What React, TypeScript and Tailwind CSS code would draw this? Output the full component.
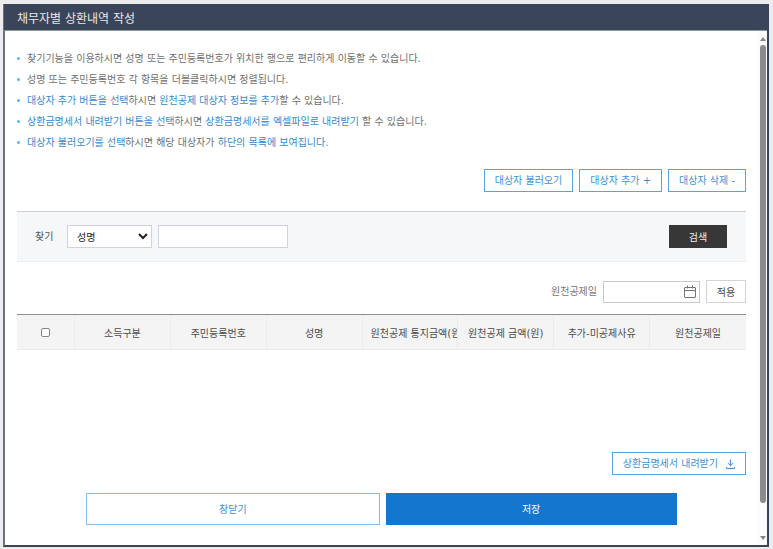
import React from "react";

const outline =
  "h-[23px] border border-[#5aa3de] bg-white px-[10px] pt-px text-[10px] leading-4 text-[#4190d3] whitespace-nowrap";

function Blue({ children }: { children: React.ReactNode }) {
  return <span className="text-[#348ad0]">{children}</span>;
}

const notes: React.ReactNode[] = [
  <>찾기기능을 이용하시면 성명 또는 주민등록번호가 위치한 행으로 편리하게 이동할 수 있습니다.</>,
  <>성명 또는 주민등록번호 각 항목을 더블클릭하시면 정렬됩니다.</>,
  <>
    <Blue>대상자 추가 버튼을 선택</Blue>하시면 <Blue>원천공제 대상자 정보를 추가</Blue>할 수 있습니다.
  </>,
  <>
    <Blue>상환금명세서 내려받기 버튼을 선택</Blue>하시면 <Blue>상환금명세서를 엑셀파일로 내려받기</Blue> 할 수 있습니다.
  </>,
  <>
    <Blue>대상자 불러오기를 선택</Blue>하시면 해당 대상자가 <Blue>하단의 목록에 보여집니다.</Blue>
  </>,
];

const columns = [
  "소득구분",
  "주민등록번호",
  "성명",
  "원천공제 통지금액(원)",
  "원천공제 금액(원)",
  "추가-미공제사유",
  "원천공제일",
];

function CalendarIcon() {
  return (
    <svg className="shrink-0" width="12" height="13" viewBox="0 0 12 13" fill="none" stroke="#73737f" aria-hidden="true">
      <rect x="0.5" y="2.5" width="11" height="10" rx="0.5" />
      <path d="M0.5 5.5h11M3.5 0.5v3M8.5 0.5v3" />
    </svg>
  );
}

function DownloadIcon() {
  return (
    <svg className="shrink-0" width="9" height="10" viewBox="0 0 9 10" fill="none" stroke="#4190d3" aria-hidden="true">
      <path d="M4.5 0.5v6.5M1.8 4l2.7 2.7 2.7-2.7M0.5 8v1.5h8V8" />
    </svg>
  );
}

function ScrollRail() {
  return (
    <div className="flex w-[10px] shrink-0 flex-col items-center bg-[#fcfcfc] pt-[6px] pb-[5px] pl-[2px]" aria-hidden="true">
      <svg width="6" height="4" viewBox="0 0 6 4" fill="#858585">
        <path d="M3 0l3 4H0z" />
      </svg>
      <div className="mt-1 w-[6px] grow-[459] rounded-full bg-[#8b8b8b]" />
      <div className="grow-[33]" />
      <svg width="6" height="4" viewBox="0 0 6 4" fill="#858585">
        <path d="M0 0h6L3 4z" />
      </svg>
    </div>
  );
}

export default function App() {
  return (
    <div className="flex min-h-screen flex-col bg-[#ececec] pt-1 pr-1 pb-[2px] pl-[3px] font-['DejaVu_Sans','Noto_Sans_CJK_KR',sans-serif] text-[10px] text-[#555]">
      <div className="flex grow flex-col border-2 border-t-0 border-[#3b4559] border-l-[#6a7180] bg-white">
        <header className="-ml-px flex h-[27px] items-center border-b border-[#8f95a1] bg-[#3b4559] pt-[3px] pl-[13px]">
          <h1 className="text-[12px] leading-4 text-[#e6e8eb]">채무자별 상환내역 작성</h1>
        </header>
        <div className="flex grow">
          <main className="min-w-0 grow pt-[17px] pr-[11px] pb-5 pl-3">
            <ul>
              {notes.map((note, i) => (
                <li key={i} className="flex items-center gap-[7px] leading-[21px] text-[#707070]">
                  <span className="size-[3px] shrink-0 rounded-full bg-[#4bbcf0]" />
                  <span>{note}</span>
                </li>
              ))}
            </ul>

            <div className="mt-4 flex justify-end gap-[6px]">
              <button type="button" className={outline}>대상자 불러오기</button>
              <button type="button" className={outline}>대상자 추가 +</button>
              <button type="button" className={outline}>대상자 삭제 -</button>
            </div>

            <form
              className="mt-[19px] flex h-[51px] items-center border-t border-b border-t-[#ccced2] border-b-[#eeeff1] bg-[#f6f7f9] pr-[19px] pl-[18px]"
              onSubmit={(e) => e.preventDefault()}
            >
              <label htmlFor="field" className="mr-3 w-5 whitespace-nowrap">찾기</label>
              <select
                id="field"
                className="h-[23px] w-[85px] border border-[#d0d2dc] bg-white pt-px pl-[5px] text-[10px] text-[#222]"
              >
                <option>성명</option>
                <option>주민등록번호</option>
              </select>
              <input
                type="text"
                aria-label="검색어"
                className="ml-[6px] h-[23px] w-[130px] border border-[#d0d2dc] bg-white px-2"
              />
              <button type="submit" className="ml-auto h-[23px] w-[58px] bg-[#373737] pt-px text-[#eee]">
                검색
              </button>
            </form>

            <div className="mt-[18px] flex items-center justify-end gap-[6px]">
              <label htmlFor="date" className="text-[#777]">원천공제일</label>
              <div className="flex h-[22px] w-[97px] items-center border border-[#c8c8cc] bg-white pr-[3px]">
                <input id="date" type="text" className="h-full min-w-0 grow px-1 outline-none" />
                <CalendarIcon />
              </div>
              <button type="button" className="h-[23px] w-10 border border-[#d4d4d4] bg-white pt-px text-[#444]">
                적용
              </button>
            </div>

            <div className="mt-[11px] h-[138px]">
              <table className="w-full table-fixed border-separate border-spacing-0 border-t border-[#8e8e8e] text-[#4c4c4c]">
                <thead>
                  <tr className="bg-[#f4f4f4]">
                    <th className="h-[35px] w-[58px] border-r border-b border-[#ebebeb] p-0">
                      <input
                        type="checkbox"
                        aria-label="전체 선택"
                        className="mx-auto block size-[9px] appearance-none rounded-[2px] border border-[#858585] bg-white"
                      />
                    </th>
                    {columns.map((c) => (
                      <th
                        key={c}
                        className="overflow-hidden border-r border-b border-[#ebebeb] px-2 pt-[2px] pb-0 font-normal whitespace-nowrap last:border-r-0"
                      >
                        {c}
                      </th>
                    ))}
                  </tr>
                </thead>
              </table>
            </div>

            <div className="flex justify-end">
              <button type="button" className={outline + " flex items-center gap-2"}>
                상환금명세서 내려받기
                <DownloadIcon />
              </button>
            </div>

            <div className="mx-auto mt-[18px] flex w-[81%] gap-[6px]">
              <button type="button" className="h-8 grow basis-0 border border-[#8abde8] bg-white pt-px text-[#4190d3]">
                창닫기
              </button>
              <button type="button" className="h-8 grow basis-0 bg-[#1576d0] pt-px text-white">
                저장
              </button>
            </div>
          </main>
          <ScrollRail />
        </div>
      </div>
    </div>
  );
}
